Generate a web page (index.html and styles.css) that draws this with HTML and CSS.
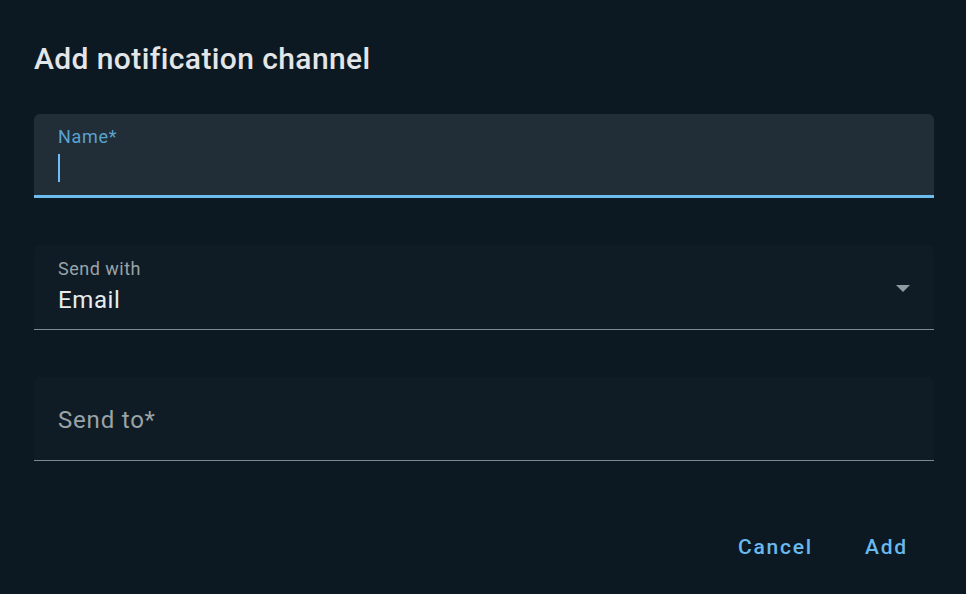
FILE: index.html
```html
<!DOCTYPE html>
<html>
<head>
<meta charset="utf-8">
<link rel="stylesheet" href="styles.css">
</head>
<body>
<div class="dialog">
  <h2 class="title">Add notification channel</h2>
  <div class="field field-focused">
    <div class="label label-focused">Name*</div>
    <div class="value"><span class="caret"></span></div>
  </div>
  <div class="field field-select">
    <div class="label">Send with</div>
    <div class="value">Email</div>
    <svg class="arrow" width="14" height="7" viewBox="0 0 14 7"><path d="M0 0 L14 0 L7 7 Z" fill="#8f9aa0"/></svg>
  </div>
  <div class="field field-empty">
    <div class="placeholder">Send to*</div>
  </div>
  <div class="actions">
    <span class="btn">Cancel</span>
    <span class="btn">Add</span>
  </div>
</div>
</body>
</html>
```
FILE: styles.css
```css
html, body {
  margin: 0;
  padding: 0;
  background: #0c1922;
  width: 966px;
  height: 594px;
  overflow: hidden;
  font-family: Roboto, "Liberation Sans", sans-serif;
}
.dialog {
  padding: 36px 32px 0 34px;
  display: flex;
  flex-direction: column;
}
.title {
  margin: 0;
  font-size: 30px;
  line-height: 45px;
  font-weight: 500;
  color: #e3e6e8;
  letter-spacing: 0.4px;
}
.field {
  position: relative;
  width: 900px;
  box-sizing: border-box;
  border-radius: 6px 6px 0 0;
  background: #0f1c25;
  border-bottom: 1px solid #7f8a90;
  padding: 0 24px;
}
.field-focused {
  margin-top: 33px;
  height: 84px;
  padding-top: 14px;
  background: #212e37;
  border-bottom: 3px solid #6cbcf0;
}
.field-select {
  margin-top: 47px;
  height: 85px;
  padding-top: 15px;
}
.field-empty {
  margin-top: 47px;
  height: 84px;
  padding-top: 29px;
}
.label {
  font-size: 18px;
  line-height: 18px;
  color: #9aa3a8;
  letter-spacing: 0.5px;
}
.label-focused {
  color: #5aa3d1;
  letter-spacing: 0.7px;
}
.value {
  margin-top: 8px;
  font-size: 24px;
  line-height: 28px;
  height: 28px;
  color: #e8ecee;
  letter-spacing: 0.6px;
}
.caret {
  display: inline-block;
  width: 2px;
  height: 28px;
  background: #6cc0f7;
  vertical-align: top;
}
.arrow {
  position: absolute;
  right: 24px;
  top: 40px;
}
.placeholder {
  font-size: 24px;
  line-height: 28px;
  color: #9aa3a8;
  letter-spacing: 0.8px;
}
.actions {
  margin-top: 72px;
  display: flex;
  justify-content: flex-end;
  gap: 52px;
  padding-right: 26px;
}
.btn {
  font-size: 21px;
  line-height: 28px;
  font-weight: 500;
  color: #6ab9ee;
  letter-spacing: 1.8px;
}
```
